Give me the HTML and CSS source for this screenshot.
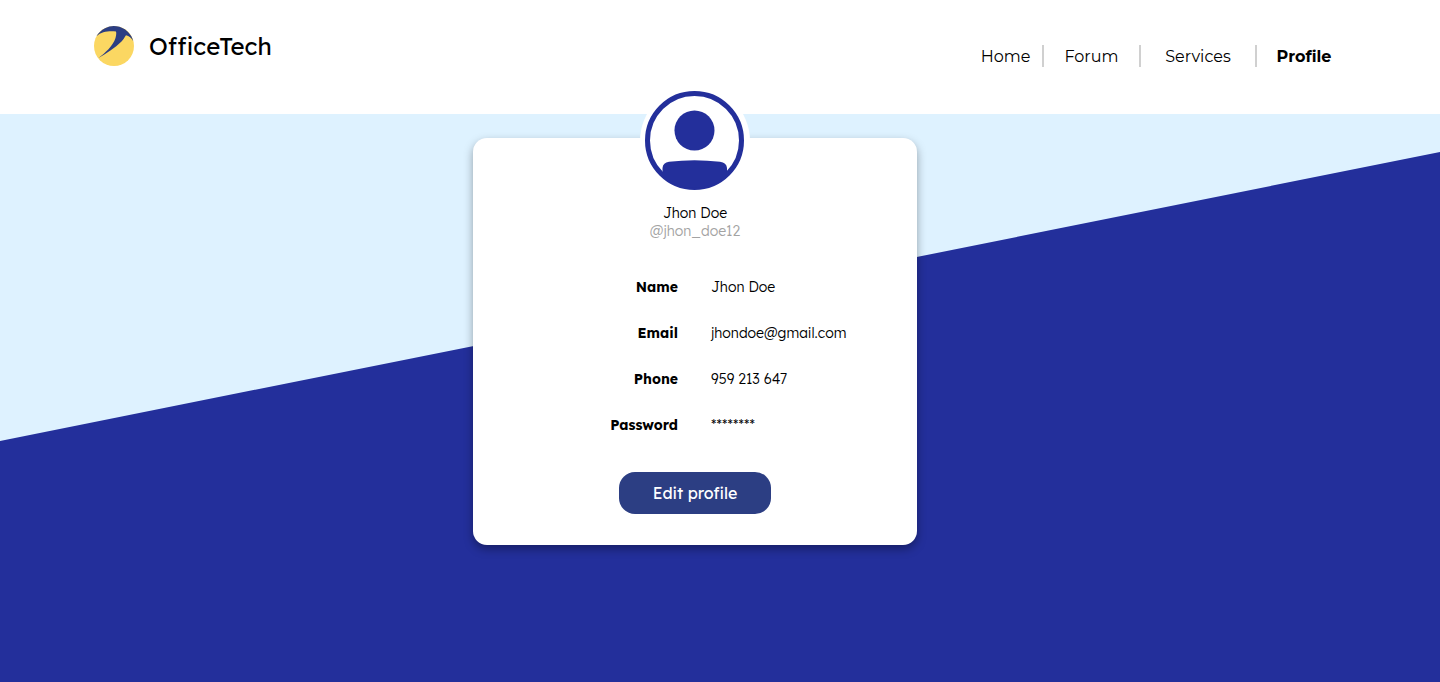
FILE: index.html
```html
<!DOCTYPE html>
<html lang="en">
<head>
<meta charset="utf-8">
<meta name="viewport" content="width=device-width, initial-scale=1">
<title>OfficeTech - Profile</title>
<link rel="stylesheet" href="styles.css">
</head>
<body>
<header class="header">
  <a class="brand" href="#">
    <svg class="brand-mark" viewBox="0 0 40 40" aria-hidden="true">
      <circle cx="20" cy="20" r="20" fill="#fbd762"/>
      <path d="M2.500 10.200A20 20 0 0 1 39.300 15.200C37.500 12 35 9.800 32 9.300C30.500 11.500 29.500 13.500 27.500 15.500C21 22 12 27.500 4.500 32C11 27 19 20 21.500 12C22.200 9.500 22.500 7.500 22 5.500C15 4.800 7.500 5.500 2.500 10.200Z" fill="#2c3e83"/>
    </svg>
    <span class="brand-name">OfficeTech</span>
  </a>
  <nav class="nav">
    <a class="nav-link nav-link-home" href="#">Home</a>
    <a class="nav-link" href="#">Forum</a>
    <a class="nav-link nav-link-wide" href="#">Services</a>
    <a class="nav-link nav-link-active" href="#" aria-current="page">Profile</a>
  </nav>
</header>
<main class="main">
  <section class="card">
    <div class="avatar">
      <svg class="avatar-icon" viewBox="0 0 99 99" role="img" aria-label="User picture">
        <circle cx="49.500" cy="49.500" r="47" fill="#fff" stroke="#232f9b" stroke-width="5"/>
        <circle cx="49.500" cy="39.500" r="20" fill="#232f9b"/>
        <path d="M17.500 84V77Q18 71.500 24 70.800Q49.500 67.800 75 70.800Q81.500 71.500 82 77V84A47 47 0 0 1 17.500 84Z" fill="#232f9b"/>
      </svg>
    </div>
    <p class="name">Jhon Doe</p>
    <p class="handle">@jhon_doe12</p>
    <dl class="details">
      <dt class="label">Name</dt><dd class="value">Jhon Doe</dd>
      <dt class="label">Email</dt><dd class="value">jhondoe@gmail.com</dd>
      <dt class="label">Phone</dt><dd class="value">959 213 647</dd>
      <dt class="label">Password</dt><dd class="value">********</dd>
    </dl>
    <button class="edit" type="button">Edit profile</button>
  </section>
</main>
</body>
</html>
```
FILE: styles.css
```css
* { box-sizing: border-box; }
body {
  margin: 0;
  min-height: 100vh;
  display: flex;
  flex-direction: column;
  font-family: Lexend, Inter, sans-serif;
  color: #000;
  background: #fff;
}
.header {
  display: flex;
  justify-content: space-between;
  align-items: flex-start;
  padding: 26px 89px 47px 94px;
}
.brand {
  display: flex;
  align-items: center;
  gap: 15px;
  color: #000;
  text-decoration: none;
}
.brand-mark { width: 40px; height: 40px; }
.brand-name { font-size: 24px; line-height: 30px; }
.nav {
  display: flex;
  margin-top: 19px;
  font-family: Montserrat, Inter, sans-serif;
}
.nav-link {
  width: 97px;
  padding-top: 2px;
  border-right: 2px solid #d0d0d0;
  font-size: 16px;
  line-height: 20px;
  text-align: center;
  color: #000;
  text-decoration: none;
}
.nav-link-home { width: 75px; }
.nav-link-wide { width: 116px; }
.nav-link-active { width: 94px; border-right: 0; font-weight: 700; }
.main {
  position: relative;
  flex: 1;
  display: flex;
  justify-content: center;
  align-items: flex-start;
  padding: 24px 50px 24px 0;
  background: #def2ff;
}
.main::before {
  content: "";
  position: absolute;
  inset: 0;
  background: #232f9b;
  clip-path: polygon(0 327px, 100% 38px, 100% 100%, 0 100%);
}
.card {
  position: relative;
  width: 444px;
  display: flex;
  flex-direction: column;
  align-items: center;
  padding-bottom: 31px;
  border-radius: 14px;
  background: #fff;
  box-shadow: 0 4px 10px rgba(0, 0, 0, 0.35);
  font-size: 14px;
  line-height: 18px;
}
.avatar {
  display: flex;
  margin-top: -52px;
  margin-bottom: 8px;
  padding: 5px 6px 6px 5px;
  border-radius: 50%;
  background: #fff;
}
.avatar-icon { width: 99px; height: 99px; }
.name, .handle { margin: 0; font-weight: 300; }
.handle { color: #a3a3a3; }
.details {
  align-self: stretch;
  display: grid;
  grid-template-columns: 205px 1fr;
  gap: 28px 33px;
  margin: 38px 0;
}
.label { font-weight: 700; text-align: right; }
.value { margin: 0; font-weight: 300; }
.edit {
  width: 152px;
  height: 42px;
  border: 0;
  border-radius: 16px;
  background: #2c3e83;
  color: #fff;
  font-family: inherit;
  font-size: 16px;
}
```
